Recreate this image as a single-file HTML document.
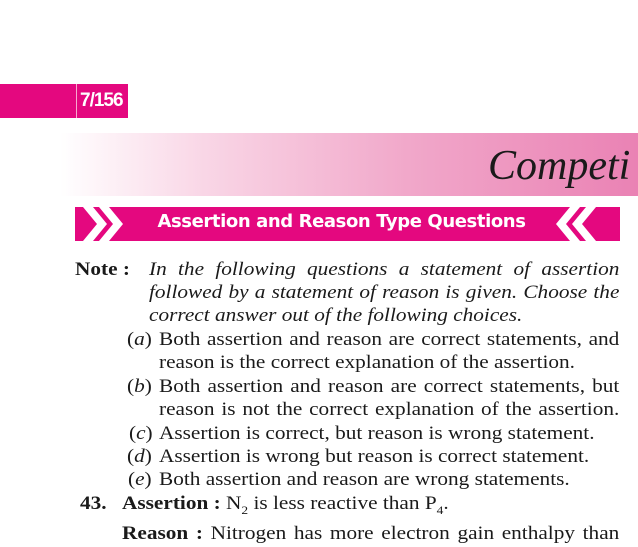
<!DOCTYPE html>
<html><head><meta charset="utf-8"><style>
body{margin:0;width:638px;height:547px;background:#fff;position:relative;overflow:hidden;font-family:"Liberation Serif",serif;color:#1a1a1a}
.l{position:absolute;font-size:19px;line-height:20px;white-space:nowrap;transform:scaleX(1.12);transform-origin:0 0}
.j{text-align:justify;text-align-last:justify;white-space:normal}
i{font-style:italic}
</style></head><body>
<div style="position:absolute;left:0;top:84px;width:128px;height:34px;background:#e4087f"></div>
<div style="position:absolute;left:76px;top:84px;width:1px;height:34px;background:#f7a8cf"></div>
<div style="position:absolute;left:80px;top:90px;color:#fff;font:bold 19px 'Liberation Sans',sans-serif;letter-spacing:-1px">7/156</div>
<div style="position:absolute;left:60px;top:133px;width:578px;height:63px;background:linear-gradient(90deg,#fff 0%,#f9d6e6 25%,#f1a8ca 60%,#ea82b4 100%)"></div>
<div style="position:absolute;left:488px;top:142px;font:italic 42px 'Liberation Serif',serif;color:#1a1a1a">Competi</div>
<div style="position:absolute;left:75px;top:207px;width:545px;height:34px;background:#e4087f"></div>
<svg style="position:absolute;left:75px;top:207px" width="545" height="34">
<polygon points="8,0 18,0 32,17 18,34 8,34 22,17" fill="#fff"/>
<polygon points="24,0 34,0 48,17 34,34 24,34 38,17" fill="#fff"/>
<polygon points="505,0 495,0 481,17 495,34 505,34 491,17" fill="#fff"/>
<polygon points="521,0 511,0 497,17 511,34 521,34 507,17" fill="#fff"/>
</svg>
<div style="position:absolute;left:141px;top:211px;width:401px;text-align:center;color:#fff;font:bold 18px 'DejaVu Sans',sans-serif;letter-spacing:-0.4px;white-space:nowrap">Assertion and Reason Type Questions</div>

<div class="l" style="left:75px;top:260px;font-weight:bold">Note :</div>
<div class="l j" style="left:149px;top:260px;width:420px"><i>In the following questions a statement of assertion</i></div>
<div class="l j" style="left:149px;top:283px;width:420px"><i>followed by a statement of reason is given. Choose the</i></div>
<div class="l" style="left:149px;top:306px"><i>correct answer out of the following choices.</i></div>
<div class="l" style="left:127px;top:330px">(<i>a</i>)</div>
<div class="l j" style="left:159px;top:330px;width:411px">Both assertion and reason are correct statements, and</div>
<div class="l" style="left:159px;top:353px">reason is the correct explanation of the assertion.</div>
<div class="l" style="left:127px;top:377px">(<i>b</i>)</div>
<div class="l j" style="left:159px;top:377px;width:411px">Both assertion and reason are correct statements, but</div>
<div class="l j" style="left:159px;top:400px;width:411px">reason is not the correct explanation of the assertion.</div>
<div class="l" style="left:129px;top:424px">(<i>c</i>)</div>
<div class="l" style="left:159px;top:424px">Assertion is correct, but reason is wrong statement.</div>
<div class="l" style="left:127px;top:447px">(<i>d</i>)</div>
<div class="l" style="left:159px;top:447px">Assertion is wrong but reason is correct statement.</div>
<div class="l" style="left:128px;top:470px">(<i>e</i>)</div>
<div class="l" style="left:159px;top:470px">Both assertion and reason are wrong statements.</div>
<div class="l" style="left:80px;top:494px;font-weight:bold">43.</div>
<div class="l" style="left:122px;top:494px"><b>Assertion :</b> N<sub style="font-size:12px">2</sub> is less reactive than P<sub style="font-size:12px">4</sub>.</div>
<div class="l j" style="left:122px;top:524px;width:444px"><b>Reason :</b> Nitrogen has more electron gain enthalpy than</div>
</body></html>
